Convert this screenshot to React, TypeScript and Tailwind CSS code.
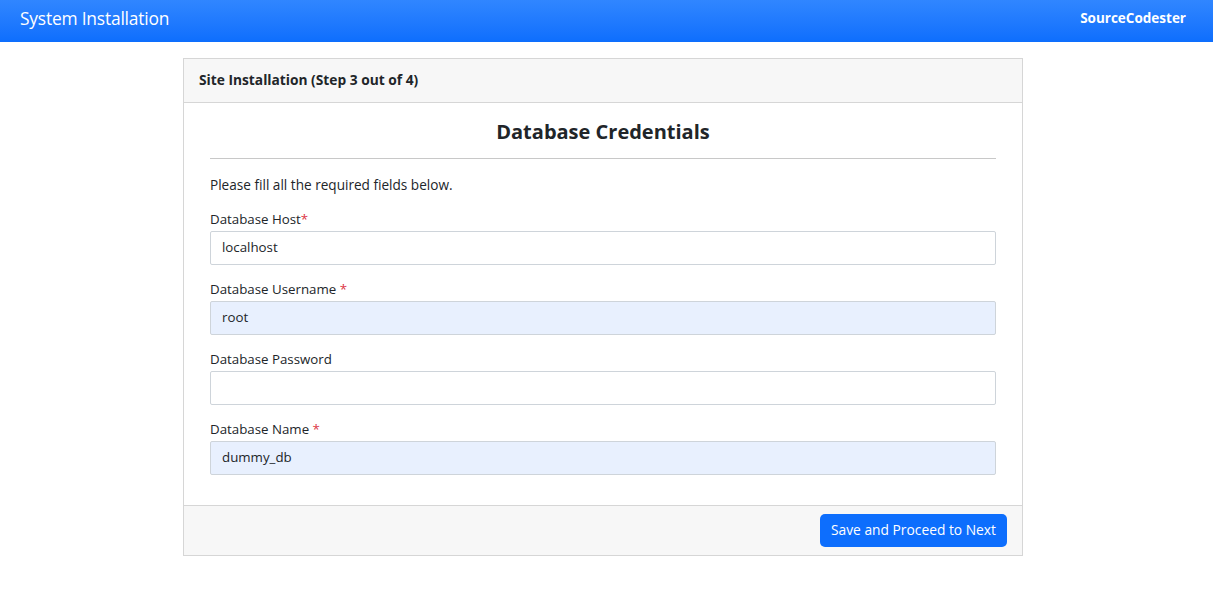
import React from 'react';

const font = { fontFamily: '"Open Sans", "Noto Sans", sans-serif' };

const Field: React.FC<{ label: string; req?: 'tight' | 'space'; value: string; filled?: boolean }> = ({ label, req, value, filled }) => (
  <div className="mb-[14px]">
    <label className="block text-[13.3px] leading-[21px] text-[#212529] mb-[1px]">
      {label}
      {req === 'space' && ' '}
      {req && <span className="text-[#dc3545]">*</span>}
    </label>
    <div
      className={`h-[34px] border border-[#ced4da] rounded-[2px] px-[11px] flex items-center text-[13.3px] text-[#212529] ${filled ? 'bg-[#e8f0fe]' : 'bg-white'}`}
    >
      {value}
    </div>
  </div>
);

const App: React.FC = () => {
  return (
    <div className="min-h-[603px] bg-white" style={font}>
      <nav className="h-[42px] bg-gradient-to-b from-[#3086ff] to-[#0d6efd] flex items-center justify-between pl-[20px] pr-[27px] pb-[5px]">
        <span className="text-white text-[17.4px] tracking-[-0.2px]">System Installation</span>
        <span className="text-white text-[13.5px] font-bold">SourceCodester</span>
      </nav>

      <div className="flex justify-center pr-[7px] pt-[16px]">
        <div className="w-[840px] border border-[#d6d6d6]">
          <div className="h-[44px] bg-[#f7f7f7] border-b border-[#d6d6d6] flex items-center px-[15px]">
            <span className="text-[13.75px] font-bold text-[#212529]">Site Installation (Step 3 out of 4)</span>
          </div>

          <div className="px-[26px] pt-[14px] pb-[16px]">
            <h2 className="text-center text-[20px] font-bold text-[#212529] leading-[30px]">Database Credentials</h2>
            <hr className="mt-[11px] mb-[16px] border-t border-[#c8c8c8]" />
            <p className="text-[13.6px] text-[#212529] leading-[20px] mb-[14px]">Please fill all the required fields below.</p>
            <Field label="Database Host" req="tight" value="localhost" />
            <Field label="Database Username" req="space" value="root" filled />
            <Field label="Database Password" value="" />
            <Field label="Database Name" req="space" value="dummy_db" filled />
          </div>

          <div className="h-[50px] bg-[#f7f7f7] border-t border-[#d6d6d6] flex items-center justify-end px-[15px]">
            <button className="h-[33px] px-[11px] rounded-[5px] bg-[#0d6efd] text-white text-[13.8px]">Save and Proceed to Next</button>
          </div>
        </div>
      </div>
    </div>
  );
};

export default App;
